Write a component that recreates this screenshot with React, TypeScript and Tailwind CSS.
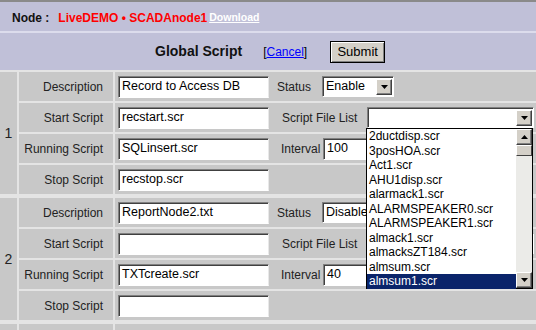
import React from "react";

const files = [
  "2ductdisp.scr",
  "3posHOA.scr",
  "Act1.scr",
  "AHU1disp.scr",
  "alarmack1.scr",
  "ALARMSPEAKER0.scr",
  "ALARMSPEAKER1.scr",
  "almack1.scr",
  "almacksZT184.scr",
  "almsum.scr",
  "almsum1.scr",
];

const Arrow = ({ up = false }: { up?: boolean }) => (
  <svg width="7" height="4" viewBox="0 0 7 4">
    <polygon points={up ? "0,4 7,4 3.5,0" : "0,0 7,0 3.5,4"} fill="#000" />
  </svg>
);

const Btn = ({ up = false }: { up?: boolean }) => (
  <div className="flex h-[16px] w-[16px] shrink-0 items-center justify-center border border-t-white border-l-white border-b-[#404040] border-r-[#404040] bg-[#d4d0c8] shadow-[inset_-1px_-1px_0_#808080]">
    <Arrow up={up} />
  </div>
);

const Field = ({ value, w }: { value: string; w: string }) => (
  <div
    className={`h-[22px] ${w} shrink-0 whitespace-nowrap border border-t-[#808080] border-l-[#808080] border-b-white border-r-[#e8e8e8] bg-white pl-[3px] text-[12.5px] leading-[19px] text-black shadow-[inset_1px_1px_0_#404040]`}
  >
    {value}
  </div>
);

const Select = ({ value, w }: { value: string; w: string }) => (
  <div
    className={`flex h-[21px] ${w} shrink-0 items-center border border-t-[#808080] border-l-[#808080] border-b-white border-r-white bg-white pr-[1px] shadow-[inset_1px_1px_0_#404040]`}
  >
    <span className="flex-1 pl-[3px] text-[12.5px] leading-[17px] text-black">{value}</span>
    <Btn />
  </div>
);

type Row = { label: string; value: string; right?: React.ReactNode };

const Group = ({ num, rows }: { num: string; rows: Row[] }) => (
  <div className="flex gap-[2px]">
    <div className="flex w-[17px] shrink-0 items-center justify-center bg-[#c8c8c8] text-[14px] text-[#222]">
      {num}
    </div>
    <div className="flex w-[94px] shrink-0 flex-col gap-[2px]">
      {rows.map((r) => (
        <div
          key={r.label}
          className="flex h-[29px] items-center justify-end whitespace-nowrap bg-[#c8c8c8] pr-[10px] text-[12px] text-[#222]"
        >
          {r.label}
        </div>
      ))}
    </div>
    <div className="flex flex-1 flex-col gap-[2px]">
      {rows.map((r) => (
        <div key={r.label} className="flex h-[29px] items-center bg-[#c8c8c8] pl-[3px]">
          <Field value={r.value} w="w-[151px]" />
          {r.right}
        </div>
      ))}
    </div>
  </div>
);

const Status = ({ value }: { value: string }) => (
  <div className="ml-[8px] flex items-center whitespace-nowrap text-[12px] text-[#222]">
    <span className="w-[45px]">Status</span>
    <Select value={value} w="w-[72px]" />
  </div>
);

const FileList = () => (
  <div className="ml-[13px] flex items-center whitespace-nowrap text-[12px] text-[#222]">
    <span className="w-[85px]">Script File List</span>
    <Select value="" w="w-[167px]" />
  </div>
);

const Interval = ({ value }: { value: string }) => (
  <div className="ml-[12px] flex items-center whitespace-nowrap text-[12px] text-[#222]">
    <span className="w-[42px]">Interval</span>
    <Field value={value} w="w-[100px]" />
  </div>
);

export default function App() {
  return (
    <div className="relative h-[330px] w-[536px] overflow-hidden bg-[#c0c0d8] font-['Liberation_Sans',Arial,sans-serif]">
      <div className="h-[2px] bg-[#8a8a8a]" />
      <div className="flex h-[29px] items-center pl-[12px] pt-[3px] text-[12px] font-bold">
        <span className="text-[#111]">Node :</span>
        <span className="ml-[9px] text-[#ff0000]">LiveDEMO • SCADAnode1</span>
        <span className="ml-[2px] text-[10.5px] text-white underline">Download</span>
      </div>
      <div className="h-[2px] bg-[#dcdcec]" />
      <div className="flex h-[37px] items-center">
        <span className="ml-[155px] text-[14px] font-bold text-[#111]">Global Script</span>
        <span className="ml-[21px] text-[12px] text-black">
          [<span className="text-[#0000ff] underline">Cancel</span>]
        </span>
        <button className="ml-[23px] h-[22px] w-[55px] border border-black bg-[#d4d0c8] text-[13px] text-black shadow-[inset_1px_1px_0_#fff,inset_-1px_-1px_0_#808080]">
          Submit
        </button>
      </div>
      <div className="flex flex-col gap-[4px] bg-[#e4e4e4] pt-[2px]">
        <Group
          num="1"
          rows={[
            { label: "Description", value: "Record to Access DB", right: <Status value="Enable" /> },
            { label: "Start Script", value: "recstart.scr", right: <FileList /> },
            { label: "Running Script", value: "SQLinsert.scr", right: <Interval value="100" /> },
            { label: "Stop Script", value: "recstop.scr" },
          ]}
        />
        <Group
          num="2"
          rows={[
            { label: "Description", value: "ReportNode2.txt", right: <Status value="Disable" /> },
            { label: "Start Script", value: "", right: <FileList /> },
            { label: "Running Script", value: "TXTcreate.scr", right: <Interval value="40" /> },
            { label: "Stop Script", value: "" },
          ]}
        />
        <div className="flex h-[29px] gap-[2px]">
          <div className="w-[17px] bg-[#c8c8c8]" />
          <div className="w-[94px] bg-[#c8c8c8]" />
          <div className="flex-1 bg-[#c8c8c8]" />
        </div>
      </div>

      <div className="absolute left-[366px] top-[128px] flex h-[161px] w-[167px] border border-black bg-white">
        <div className="flex flex-1 flex-col">
          {files.map((f, i) => (
            <div
              key={f}
              className={`h-[14.5px] pl-[2px] text-[12px] leading-[14.5px] ${
                i === files.length - 1 ? "bg-[#0a246a] text-white" : "text-black"
              }`}
            >
              {f}
            </div>
          ))}
        </div>
        <div className="flex w-[16px] flex-col bg-[#ebebe8]">
          <Btn up />
          <div className="h-[11px] border border-t-white border-l-white border-b-[#404040] border-r-[#404040] bg-[#d4d0c8]" />
          <div className="flex-1" />
          <Btn />
        </div>
      </div>
    </div>
  );
}
